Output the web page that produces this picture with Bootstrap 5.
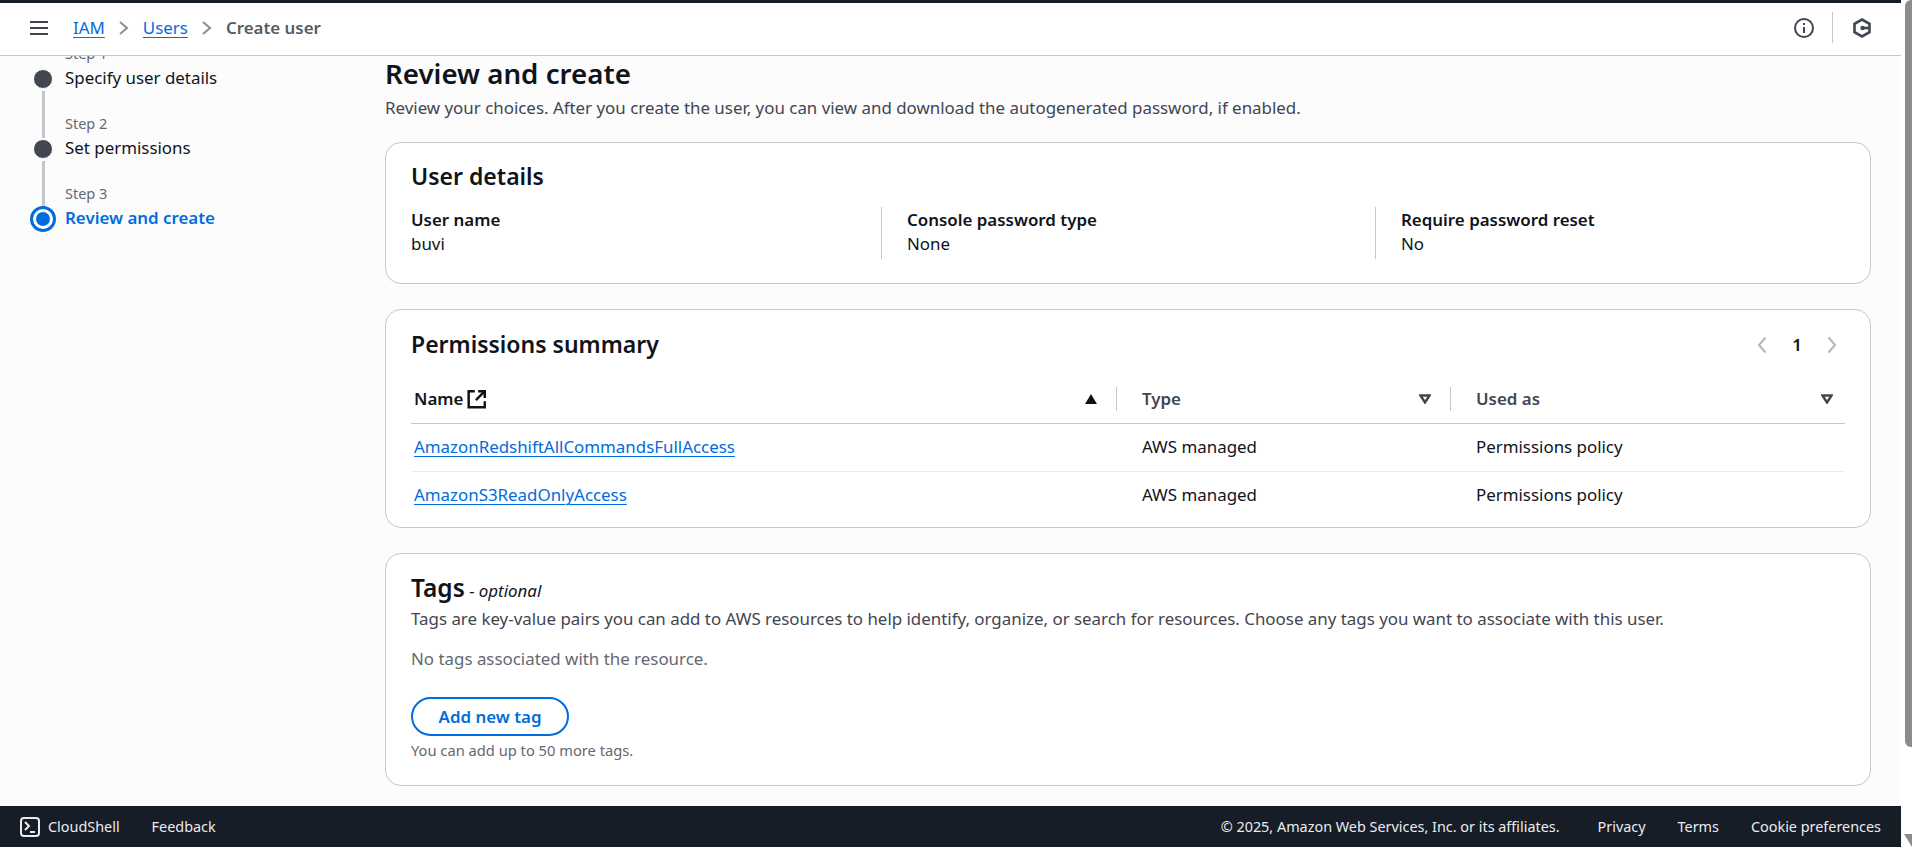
<!DOCTYPE html>
<html lang="en">
<head>
  <meta charset="UTF-8" />
  <meta name="viewport" content="width=device-width, initial-scale=1.0">
  <title>Create user</title>
  <link href="https://cdn.jsdelivr.net/npm/bootstrap@5.3.0/dist/css/bootstrap.min.css" rel="stylesheet">
  <style>
    html, body { height: 100%; overflow: hidden; }
    body { background: #fff; font-family: "Noto Sans", "Liberation Sans", sans-serif; font-size: 16.9px; line-height: 24px; color: #0f141a; }
    a { color: #006ce0; text-decoration-thickness: 1px; text-underline-offset: 3px; }
    .app-shell { height: 100vh; margin-right: 11px; }
    .top-strip { height: 3px; background: #161d26; flex: none; }
    .top-bar { height: 53px; flex: none; background: #fff; border-bottom: 1px solid #c6c6cd; padding: 0 30px 3px 29px; }
    .crumb-sep { margin: 0 14px; }
    .crumb-now { color: #545b64; font-weight: 600; }
    .tool-sep { width: 1px; height: 31px; background: #c6c6cd; margin: 0 20px 0 18px; }
    .page-body { background: #fcfcfd; min-height: 0; overflow: hidden; }
    .step-col { width: 385px; flex: none; padding: 0 0 0 30px; margin-top: -13px; }
    .step-item { display: flex; gap: 9px; }
    .step-rail { width: 26px; display: flex; flex-direction: column; align-items: center; flex: none; }
    .step-dot { width: 20px; height: 20px; border-radius: 50%; background: #424650; border: 1px solid #fcfcfd; flex: none; margin-top: 26px; }
    .step-dot-on { width: 26px; height: 26px; background: #fff; border: 3px solid #006ce0; display: flex; align-items: center; justify-content: center; margin-top: 23px; }
    .step-dot-on::after { content: ""; width: 14px; height: 14px; border-radius: 50%; background: #006ce0; }
    .step-line { width: 3px; height: 47px; background: #c6c6cd; margin: 2px 0 -25px; }
    .step-text { height: 70px; }
    .step-num { color: #656871; font-size: 14.5px; line-height: 20px; margin-top: 0; }
    .step-name { color: #0f141a; line-height: 24px; margin-top: 3px; }
    .step-name-on { color: #006ce0; font-weight: 600; }
    .main-col { width: 1486px; flex: none; }
    .page-title { font-size: 27.7px; line-height: 32px; font-weight: 600; margin: 1px 0 7px; }
    .page-sub { color: #424650; margin: 0 0 22px; line-height: 24px; }
    .box { background: #fff; border: 1px solid #c6c6cd; border-radius: 16px; margin-bottom: 25px; padding: 17px 25px 0; }
    .box-title { font-size: 23px; line-height: 30px; font-weight: 600; margin: 0; }
    .box-details { height: 142px; padding-top: 18px; }
    .kv-row { margin-top: 16px; }
    .kv-col { width: 494px; flex: none; border-left: 1px solid #c6c6cd; padding-left: 25px; height: 52px; }
    .kv-col:first-child { width: 470px; border-left: 0; padding-left: 0; }
    .kv-key { font-weight: 600; line-height: 25px; }
    .box-perm { height: 219px; padding-top: 19px; }
    .perm-table { width: 100%; table-layout: fixed; margin-top: 8px; }
    .perm-table th { height: 56px; border-bottom: 1px solid #c6c6cd; font-weight: 600; color: #424650; padding: 8px 0 0 0; }
    .perm-table td { height: 48px; border-bottom: 1px solid #ebebf0; padding: 0 0 0 25px; }
    .perm-table td:first-child { padding-left: 3px; }
    .perm-table tr:last-child td { border-bottom: 0; }
    .th-inner { display: flex; justify-content: space-between; align-items: center; height: 24px; padding: 0 19px 0 25px; }
    .th-first { padding-left: 3px; color: #0f141a; }
    .th-last { padding-right: 12px; }
    .th-rule { border-right: 1px solid #c6c6cd; }
    .pager-wrap { font-weight: 600; padding-right: 7px; margin-top: 1px; }
    .pager-digit { margin: 0 24px; }
    .box-tags { height: 233px; padding-top: 20px; }
    .tags-title { font-size: 24.5px; font-weight: 600; line-height: 28px; }
    .tags-opt { font-size: 16.9px; font-style: italic; }
    .tags-desc { margin: 4px 0 0; color: #424650; }
    .tags-none { margin: 16px 0 0; color: #656871; }
    .add-btn { display: block; width: 158px; height: 39px; margin-top: 26px; border: 2px solid #006ce0; border-radius: 20px; color: #006ce0; font-weight: 600; font-size: 16.9px; line-height: 33px; text-align: center; padding: 0; background: #fff; }
    .tags-hint { font-size: 14.7px; color: #656871; margin-top: 5px; line-height: 18px; }
    .foot-bar { height: 41px; flex: none; background: #161d26; color: #ebebf0; font-size: 14.4px; padding: 0 20px 0 20px; }
    .foot-bar a { color: #ebebf0; text-decoration: none; }
    .foot-gap { margin-left: 32px; }
    .foot-gap-wide { margin-left: 38px; }
    .scroll-track { right: 0; top: 0; bottom: 0; width: 7px; }
    .scroll-thumb { height: 747px; background: #8c8c8c; border-radius: 6px 0 0 6px; }
    .scroll-arrow { right: 0; bottom: 0; border-style: solid; border-width: 13px 0 0 8px; border-color: #8c8c8c transparent transparent transparent; }
  </style>
</head>
<body>
  <div class="position-absolute scroll-track">
    <div class="scroll-thumb"></div>
    <div class="position-absolute scroll-arrow"></div>
  </div>
  <div class="app-shell d-flex flex-column">
    <div class="top-strip"></div>
    <!-- Breadcrumb bar -->
    <div class="top-bar d-flex align-items-center">
      <svg width="20" height="16" viewBox="0 0 20 16" class="me-3" fill="none" stroke="#424650" stroke-width="2"><path d="M1 2h18M1 8h18M1 14h18"/></svg>
      <a href="#" class="ms-2">IAM</a>
      <svg class="crumb-sep" width="10" height="16" viewBox="0 0 10 16" fill="none" stroke="#8c8c94" stroke-width="2"><path d="M1 2l7 6-7 6"/></svg>
      <a href="#">Users</a>
      <svg class="crumb-sep" width="10" height="16" viewBox="0 0 10 16" fill="none" stroke="#8c8c94" stroke-width="2"><path d="M1 2l7 6-7 6"/></svg>
      <span class="crumb-now">Create user</span>
      <div class="ms-auto d-flex align-items-center">
        <svg width="20" height="20" viewBox="0 0 20 20" fill="none" stroke="#424650" stroke-width="2"><circle cx="10" cy="10" r="9"/><path d="M10 9v6M10 5v2"/></svg>
        <div class="tool-sep"></div>
        <svg width="18" height="20" viewBox="0 0 18 20" fill="none" stroke="#424650" stroke-width="2.6"><path d="M9 1.500l7.500 4.300v8.400L9 18.500l-7.500-4.300V5.800z"/><path d="M9 10h7"/><circle cx="9.500" cy="10" r="2.200" fill="#424650" stroke="none"/></svg>
      </div>
    </div>

    <div class="page-body d-flex flex-grow-1">
      <!-- Wizard steps -->
      <div class="step-col">
        <div class="step-item">
          <div class="step-rail"><div class="step-dot"></div><div class="step-line"></div></div>
          <div class="step-text"><div class="step-num">Step 1</div><div class="step-name">Specify user details</div></div>
        </div>
        <div class="step-item">
          <div class="step-rail"><div class="step-dot"></div><div class="step-line"></div></div>
          <div class="step-text"><div class="step-num">Step 2</div><div class="step-name">Set permissions</div></div>
        </div>
        <div class="step-item">
          <div class="step-rail"><div class="step-dot step-dot-on"></div></div>
          <div class="step-text"><div class="step-num">Step 3</div><div class="step-name step-name-on">Review and create</div></div>
        </div>
      </div>

      <div class="main-col">
        <h1 class="page-title">Review and create</h1>
        <p class="page-sub">Review your choices. After you create the user, you can view and download the autogenerated password, if enabled.</p>

        <!-- User details -->
        <div class="box box-details">
          <h2 class="box-title">User details</h2>
          <div class="d-flex kv-row">
            <div class="kv-col"><div class="kv-key">User name</div><div>buvi</div></div>
            <div class="kv-col"><div class="kv-key">Console password type</div><div>None</div></div>
            <div class="kv-col"><div class="kv-key">Require password reset</div><div>No</div></div>
          </div>
        </div>

        <!-- Permissions -->
        <div class="box box-perm">
          <div class="d-flex justify-content-between align-items-center">
            <h2 class="box-title">Permissions summary</h2>
            <div class="d-flex align-items-center pager-wrap">
              <svg width="12" height="18" viewBox="0 0 12 18" fill="none" stroke="#b4b4bb" stroke-width="2"><path d="M9.500 1.500L3 9l6.500 7.500"/></svg>
              <span class="pager-digit">1</span>
              <svg width="12" height="18" viewBox="0 0 12 18" fill="none" stroke="#b4b4bb" stroke-width="2"><path d="M2.500 1.500L9 9l-6.500 7.500"/></svg>
            </div>
          </div>
          <table class="perm-table">
            <colgroup><col style="width: 706px"><col style="width: 334px"><col></colgroup>
            <thead>
              <tr>
                <th>
                  <div class="th-inner th-first th-rule">
                    <span class="d-flex align-items-center gap-1">Name
                      <svg width="20" height="20" viewBox="0 0 18 18" fill="none" stroke="#0f141a" stroke-width="2.200"><path d="M7 2H1.500v14.500h14.500V11M10 2h6v6M16 2L8 10"/></svg>
                    </span>
                    <svg width="12" height="10" viewBox="0 0 12 10"><path d="M6 0l6 10H0z" fill="#0f141a"/></svg>
                  </div>
                </th>
                <th>
                  <div class="th-inner th-rule">Type
                    <svg width="12" height="10" viewBox="0 0 12 10" fill="none" stroke="#424650" stroke-width="2.4"><path d="M1.500 1.500h9L6 8.500z"/></svg>
                  </div>
                </th>
                <th>
                  <div class="th-inner th-last">Used as
                    <svg width="12" height="10" viewBox="0 0 12 10" fill="none" stroke="#424650" stroke-width="2.4"><path d="M1.500 1.500h9L6 8.500z"/></svg>
                  </div>
                </th>
              </tr>
            </thead>
            <tbody>
              <tr><td><a href="#">AmazonRedshiftAllCommandsFullAccess</a></td><td>AWS managed</td><td>Permissions policy</td></tr>
              <tr><td><a href="#">AmazonS3ReadOnlyAccess</a></td><td>AWS managed</td><td>Permissions policy</td></tr>
            </tbody>
          </table>
        </div>

        <!-- Tags -->
        <div class="box box-tags">
          <div><span class="tags-title">Tags</span> <span class="tags-opt">- optional</span></div>
          <p class="tags-desc">Tags are key-value pairs you can add to AWS resources to help identify, organize, or search for resources. Choose any tags you want to associate with this user.</p>
          <p class="tags-none">No tags associated with the resource.</p>
          <button type="button" class="add-btn">Add new tag</button>
          <div class="tags-hint">You can add up to 50 more tags.</div>
        </div>
      </div>
    </div>

    <!-- Console footer -->
    <div class="foot-bar d-flex align-items-center">
      <svg width="20" height="20" viewBox="0 0 20 20" fill="none" stroke="#ebebf0" stroke-width="2" class="me-2"><rect x="1" y="1" width="18" height="18" rx="3"/><path d="M5 5l4 4-4 4M10 15h5"/></svg>
      <a href="#">CloudShell</a>
      <a href="#" class="foot-gap">Feedback</a>
      <div class="ms-auto d-flex">
        <span>© 2025, Amazon Web Services, Inc. or its affiliates.</span>
        <a href="#" class="foot-gap-wide">Privacy</a>
        <a href="#" class="foot-gap">Terms</a>
        <a href="#" class="foot-gap">Cookie preferences</a>
      </div>
    </div>
  </div>
</body>
</html>
